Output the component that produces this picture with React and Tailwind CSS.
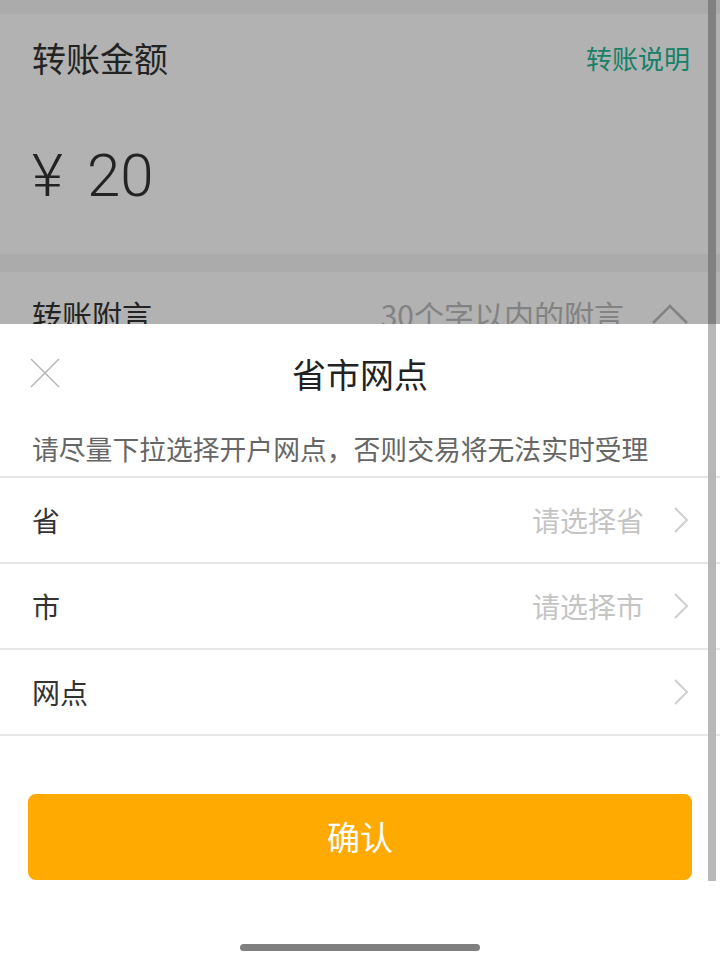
import React from 'react'

const font = { fontFamily: '"Noto Sans CJK SC", "Noto Sans", sans-serif' }

const Chevron = () => (
    <svg width="16" height="28" viewBox="0 0 16 28" fill="none" className="shrink-0">
        <path d="M2 2 L14 14 L2 26" stroke="#cfcfcf" strokeWidth="2" />
    </svg>
)

const Row = ({ label, placeholder }) => (
    <div className="h-[86px] flex items-center justify-between pl-[32px] pr-[31px] border-b-2 border-[#e6e6e6]">
        <div className="text-[28px] text-[#333333]">{label}</div>
        <div className="flex items-center gap-[29px]">
            {placeholder && <div className="text-[28px] text-[#c4c4c4]">{placeholder}</div>}
            <Chevron />
        </div>
    </div>
)

const App = () => {
    return (
        <div className="relative w-[720px] h-[966px] overflow-hidden bg-[#f5f5f5]" style={font}>
            {/* page behind sheet */}
            <div className="h-[14px]"></div>
            <div className="h-[240px] bg-white px-[32px] flex flex-col">
                <div className="h-[86px] flex items-center justify-between">
                    <div className="text-[34px] text-[#333333]">转账金额</div>
                    <div className="text-[26px] text-[#22b894] mr-[-2px]">转账说明</div>
                </div>
                <div className="flex items-center h-[80px] mt-[36px] gap-[24px] text-[#333333]" style={{ fontFamily: 'Roboto, "Noto Sans CJK SC", sans-serif' }}>
                    <span className="text-[60px] font-light leading-none">¥</span>
                    <span className="text-[60px] font-light leading-none">20</span>
                </div>
            </div>
            <div className="h-[18px]"></div>
            <div className="h-[90px] bg-white px-[32px] flex items-start justify-between pt-[22px]">
                <div className="text-[30px] text-[#333333] leading-[40px]">转账附言</div>
                <div className="flex items-center gap-[28px]">
                    <div className="text-[30px] text-[#bbbbbb] leading-[40px]">30个字以内的附言</div>
                    <svg width="36" height="20" viewBox="0 0 36 20" fill="none">
                        <path d="M1 19 L18 2 L35 19" stroke="#bbbbbb" strokeWidth="2.5" />
                    </svg>
                </div>
            </div>

            {/* bottom sheet */}
            <div className="absolute left-0 right-0 bottom-0 h-[642px] bg-white">
                <div className="relative h-[98px] flex items-center justify-center">
                    <svg className="absolute left-[30px] top-[34px]" width="30" height="30" viewBox="0 0 30 30">
                        <path d="M1 1 L29 29 M29 1 L1 29" stroke="#b5b5b5" strokeWidth="1.5" />
                    </svg>
                    <div className="text-[34px] text-[#222222]">省市网点</div>
                </div>
                <div className="h-[56px] flex items-center px-[32px] border-b-2 border-[#e6e6e6]">
                    <div className="text-[26.8px] text-[#666666] whitespace-nowrap">请尽量下拉选择开户网点，否则交易将无法实时受理</div>
                </div>
                <Row label="省" placeholder="请选择省" />
                <Row label="市" placeholder="请选择市" />
                <Row label="网点" />
                <div className="px-[28px] pt-[58px]">
                    <div className="h-[86px] rounded-[8px] bg-[#ffaa00] flex items-center justify-center">
                        <span className="text-[33px] text-white">确认</span>
                    </div>
                </div>
                <div className="flex justify-center pt-[64px]">
                    <div className="w-[240px] h-[7px] rounded-full bg-[#808080]"></div>
                </div>
            </div>

            {/* scroll strip */}
            <div className="absolute top-0 left-[708px] w-[8px] h-[881px] bg-[#b8b8b8]"></div>

            {/* dim overlay above sheet */}
            <div className="absolute top-0 left-0 right-0 h-[324px] bg-black/30"></div>
        </div>
    )
}

export default App
